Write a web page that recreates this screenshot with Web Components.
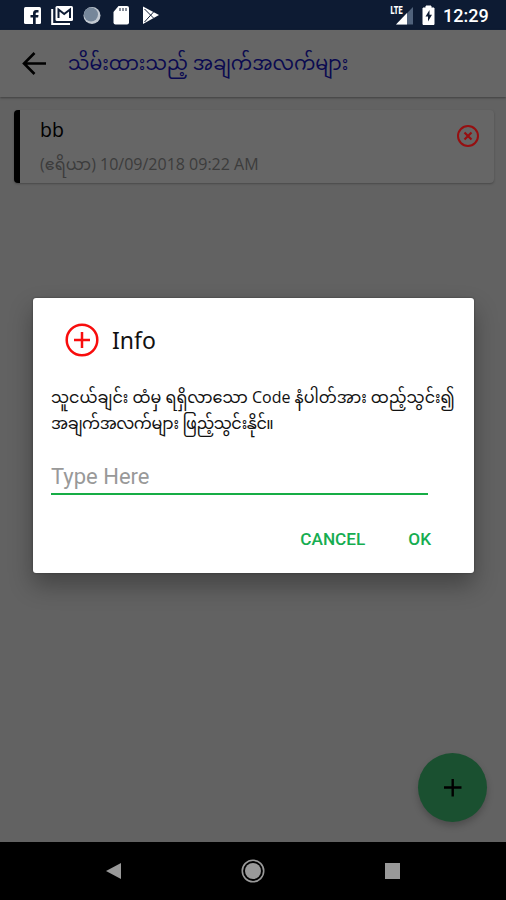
<!doctype html>
<html lang="my">
<head>
    <meta charset="utf-8">
    <title>သိမ်းထားသည့် အချက်အလက်များ</title>
    <style>
        body {
            margin: 0;
            overflow: hidden;
            font-family: "Open Sans", "Noto Sans Myanmar", Padauk, "Noto Sans", sans-serif;
        }
    </style>
</head>
<body>
<info-screen>
    <status-bar slot="status" time="12:29"></status-bar>
    <title-bar slot="title">သိမ်းထားသည့် အချက်အလက်များ</title-bar>
    <saved-item>
        <span slot="name">bb</span>
        <span slot="detail">(ဧရိယာ) 10/09/2018 09:22 AM</span>
    </saved-item>
    <add-button slot="action"></add-button>
    <info-dialog slot="dialog" placeholder="Type Here">
        <span slot="title">Info</span>
        <span slot="first">သူငယ်ချင်း ထံမှ ရရှိလာသော Code နံပါတ်အား ထည့်သွင်း၍</span>
        <span slot="second">အချက်အလက်များ ဖြည့်သွင်းနိုင်။</span>
        <span slot="cancel">CANCEL</span>
        <span slot="ok">OK</span>
    </info-dialog>
    <nav-bar slot="nav"></nav-bar>
</info-screen>

<template id="info-screen">
    <style>
        :host {
            display: flex;
            flex-direction: column;
            position: relative;
            width: 506px;
            height: 900px;
            background: #626262;
        }

        main {
            flex: 1;
            padding: 13px 12px 0 14px;
        }
    </style>
    <slot name="status"></slot>
    <slot name="title"></slot>
    <main><slot></slot></main>
    <slot name="nav"></slot>
    <slot name="action"></slot>
    <slot name="dialog"></slot>
</template>

<template id="status-bar">
    <style>
        :host {
            display: flex;
            justify-content: space-between;
            height: 30px;
            background: #0d1b33;
            color: #fff;
        }

        svg {
            display: block;
        }

        .right {
            display: flex;
        }

        .time {
            width: 63px;
            font: 500 18px/32px Roboto, sans-serif;
        }
    </style>
    <svg width="170" height="30" viewBox="0 0 170 30">
        <rect x="24" y="7" width="17" height="17" rx="1.5" fill="#fff"/>
        <path d="M33 24v-6.500h-2.500v-2.500h2.500v-1.500q0-3.500 3-3.500h2.500v2.500h-1.500q-1.300 0-1.300 1v1.500h2.800l-.4 2.500h-2.400V24z" fill="#0d1b33"/>
        <rect x="55.500" y="6" width="17.500" height="15" rx="1.500" fill="#fff"/>
        <path d="M58.500 18V9.500l5.700 4.500 5.800-4.500V18" fill="none" stroke="#0d1b33" stroke-width="2"/>
        <path d="M52.200 9v15H70" fill="none" stroke="#fff" stroke-width="2"/>
        <circle cx="92" cy="15.500" r="8.500" fill="#c3cad2"/>
        <circle cx="91" cy="14.500" r="7" fill="#76879a"/>
        <path d="M113.500 12l5-6H127q2 0 2 2v14.500q0 2-2 2h-11.500q-2 0-2-2z" fill="#fff"/>
        <path d="M120 8v3M123 8v3M126 8v3" stroke="#0d1b33" stroke-width="1"/>
        <path d="M143 6.500v17.500L159 15z" fill="#fff"/>
        <path d="M144.500 9l9 9M144.500 22l9-10" stroke="#0d1b33" stroke-width="1"/>
    </svg>
    <div class="right">
        <svg width="53" height="30" viewBox="390 0 53 30">
            <path d="M396 24.500L413 7v17.500z" fill="#50627b"/>
            <path d="M396 24.500l11-11.500v11.500z" fill="#fff"/>
            <text x="390.500" y="14" font-family="Roboto" font-size="10.500" font-weight="900" fill="#fff" textLength="12" lengthAdjust="spacingAndGlyphs">LTE</text>
            <path d="M423 8h3V6h5v2h3v16.500h-11z" fill="#fff" stroke="#fff" stroke-linejoin="round"/>
            <path d="M429.500 10l-4 6.500h2.500v5l4-6.700h-2.500z" fill="#0d1b33"/>
        </svg>
        <div class="time"></div>
    </div>
</template>

<template id="title-bar">
    <style>
        :host {
            display: flex;
            align-items: center;
            gap: 21px;
            height: 67px;
            padding-left: 22px;
            background: #666;
            box-shadow: 0 1px 2px #404040;
            color: #0a0a50;
            font-size: 19px;
            white-space: nowrap;
        }

        span {
            padding-top: 3px;
        }
    </style>
    <svg width="25" height="24" viewBox="0 0 25 24">
        <path d="M24 11.500H2M12.500 1L2 11.500 12.500 22" fill="none" stroke="#000" stroke-width="2.600"/>
    </svg>
    <span><slot></slot></span>
</template>

<template id="saved-item">
    <style>
        :host {
            display: flex;
            box-sizing: border-box;
            height: 73px;
            border-left: 6px solid #000;
            border-radius: 4px;
            background: #666;
            box-shadow: 0 1px 2px #484848;
            white-space: nowrap;
        }

        .text {
            flex: 1;
            padding-left: 20px;
        }

        .name {
            font-size: 19.500px;
            line-height: 22px;
            padding-top: 9px;
            color: #000;
        }

        .detail {
            font-size: 16px;
            line-height: 22px;
            padding-top: 12px;
            color: #3c3c3c;
        }

        svg {
            margin: 14px 14px 0 0;
        }
    </style>
    <div class="text">
        <div class="name"><slot name="name"></slot></div>
        <div class="detail"><slot name="detail"></slot></div>
    </div>
    <svg width="24" height="24" viewBox="0 0 24 24" fill="none" stroke="#960f10" stroke-width="2">
        <circle cx="12" cy="12" r="10"/>
        <path d="M8.500 8.500l7 7M15.500 8.500l-7 7" stroke-width="2.200"/>
    </svg>
</template>

<template id="add-button">
    <style>
        :host {
            position: absolute;
            left: 418px;
            top: 753px;
            width: 69px;
            height: 69px;
            border-radius: 50%;
            background: #1a5030;
            box-shadow: 0 4px 7px rgba(0, 0, 0, .22);
        }
    </style>
    <svg width="69" height="69">
        <path d="M26 34.500h17.500M34.700 26v17.500" stroke="#000" stroke-width="2.400"/>
    </svg>
</template>

<template id="info-dialog">
    <style>
        :host {
            position: absolute;
            left: 33px;
            top: 298px;
            box-sizing: border-box;
            width: 441px;
            height: 275px;
            padding: 25px 18px 0;
            border-radius: 3px;
            background: #fff;
            box-shadow: 0 0 2px #333, 0 12px 24px rgba(0, 0, 0, .32);
            color: #111;
            white-space: nowrap;
        }

        header {
            display: flex;
            align-items: center;
            gap: 13px;
            height: 34px;
            padding-left: 14px;
            font: 23px "Noto Sans", sans-serif;
        }

        .message {
            padding-top: 27px;
            font-size: 16px;
            line-height: 26px;
        }

        .second {
            letter-spacing: -.45px;
        }

        .field {
            width: 377px;
            height: 33px;
            margin-top: 24px;
            border-bottom: 2px solid #16ad45;
            color: #999;
            font: 22px/33px Roboto, sans-serif;
        }

        footer {
            display: flex;
            justify-content: flex-end;
            gap: 43px;
            padding: 32px 25px 0 0;
            color: #16ad51;
            font: 500 17.200px/24px Roboto, sans-serif;
        }
    </style>
    <header>
        <svg width="34" height="34" fill="none" stroke="#f80d0d" stroke-width="2.500">
            <circle cx="17" cy="17" r="15.300"/>
            <path d="M9 17h16M17 9v16"/>
        </svg>
        <slot name="title"></slot>
    </header>
    <div class="message">
        <div class="first"><slot name="first"></slot></div>
        <div class="second"><slot name="second"></slot></div>
    </div>
    <div class="field"></div>
    <footer>
        <slot name="cancel"></slot>
        <slot name="ok"></slot>
    </footer>
</template>

<template id="nav-bar">
    <style>
        :host {
            display: flex;
            justify-content: space-between;
            align-items: center;
            height: 58px;
            padding: 0 105px;
            background: #000;
        }
    </style>
    <svg width="17" height="18"><path d="M16 1v16L1 9z" fill="#999"/></svg>
    <svg width="24" height="24">
        <circle cx="12" cy="12" r="10.700" fill="none" stroke="#999" stroke-width="1.600"/>
        <circle cx="12" cy="12" r="8" fill="#999"/>
    </svg>
    <svg width="17" height="18"><path d="M1 1h15v16H1z" fill="#999"/></svg>
</template>

<script>
    "use strict";

    class TemplateElement extends HTMLElement {
        constructor() {
            super();

            const template = document.getElementById(this.localName);
            this.attachShadow({mode: 'open'}).appendChild(template.content.cloneNode(true));
        }
    }

    class StatusBar extends TemplateElement {
        connectedCallback() {
            this.shadowRoot.querySelector('.time').textContent = this.getAttribute('time');
        }
    }

    class InfoDialog extends TemplateElement {
        connectedCallback() {
            this.shadowRoot.querySelector('.field').textContent = this.getAttribute('placeholder');
        }
    }

    window.customElements.define('info-screen', class extends TemplateElement {});
    window.customElements.define('status-bar', StatusBar);
    window.customElements.define('title-bar', class extends TemplateElement {});
    window.customElements.define('saved-item', class extends TemplateElement {});
    window.customElements.define('add-button', class extends TemplateElement {});
    window.customElements.define('info-dialog', InfoDialog);
    window.customElements.define('nav-bar', class extends TemplateElement {});
</script>
</body>
</html>
